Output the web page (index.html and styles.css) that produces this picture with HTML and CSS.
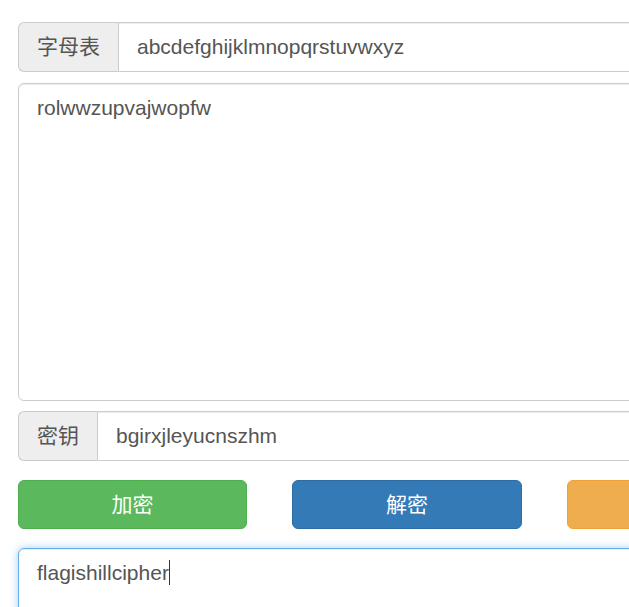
FILE: index.html
```html
<!DOCTYPE html>
<html lang="zh-CN">
<head>
<meta charset="utf-8">
<title>希尔密码</title>
<link rel="stylesheet" href="styles.css">
</head>
<body>
<div class="container">
  <div class="input-group">
    <span class="addon">字母表</span>
    <input class="field" type="text" value="abcdefghijklmnopqrstuvwxyz">
  </div>
  <textarea class="area area-input">rolwwzupvajwopfw</textarea>
  <div class="input-group">
    <span class="addon">密钥</span>
    <input class="field" type="text" value="bgirxjleyucnszhm">
  </div>
  <div class="buttons">
    <button class="btn btn-success">加密</button>
    <button class="btn btn-primary">解密</button>
    <button class="btn btn-warning">清空</button>
  </div>
  <div class="area area-output focused">flagishillcipher<span class="caret"></span></div>
</div>
</body>
</html>
```
FILE: styles.css
```css
html, body {
  margin: 0;
  padding: 0;
  overflow: hidden;
  background: #fff;
}
body {
  font-family: "Liberation Sans", Arial, "Noto Sans CJK SC", sans-serif;
  color: #555;
}
.container {
  width: 800px;
  padding: 22px 0 0 18px;
  display: flex;
  flex-direction: column;
}
.input-group {
  display: flex;
  height: 50px;
}
.addon {
  box-sizing: border-box;
  height: 50px;
  padding: 0 18px;
  font-size: 21px;
  line-height: 48px;
  background: #eee;
  border: 1px solid #ccc;
  border-right: 0;
  border-radius: 6px 0 0 6px;
  color: #555;
  white-space: nowrap;
}
.field {
  flex: 1;
  box-sizing: border-box;
  height: 50px;
  margin: 0;
  padding: 0 18px;
  font-family: inherit;
  font-size: 21px;
  color: #555;
  border: 1px solid #ccc;
  border-radius: 0 6px 6px 0;
  box-shadow: inset 0 1px 1px rgba(0,0,0,.075);
  outline: none;
}
.area {
  box-sizing: border-box;
  display: block;
  width: 100%;
  margin: 0;
  padding: 10px 18px;
  font-family: inherit;
  font-size: 21px;
  line-height: 28px;
  color: #555;
  border: 1px solid #ccc;
  border-radius: 6px;
  box-shadow: inset 0 1px 1px rgba(0,0,0,.075);
  resize: none;
  outline: none;
}
.area-input {
  height: 318px;
  margin: 11px 0 10px;
}
.buttons {
  display: grid;
  grid-template-columns: 229px 230px 230px;
  column-gap: 45px;
  margin-top: 19px;
}
.btn {
  box-sizing: border-box;
  height: 49px;
  margin: 0;
  padding: 0 0 3px;
  font-family: "Noto Sans CJK SC", sans-serif;
  font-size: 21px;
  line-height: 1;
  color: #fff;
  border: 1px solid transparent;
  border-radius: 6px;
}
.btn-success { background: #5cb85c; border-color: #4cae4c; }
.btn-primary { background: #337ab7; border-color: #2e6da4; }
.btn-warning { background: #f0ad4e; border-color: #eea236; }
.area-output {
  margin-top: 19px;
  height: 120px;
}
.focused {
  border-color: #66afe9;
  box-shadow: inset 0 1px 1px rgba(0,0,0,.075), 0 0 8px rgba(102,175,233,.6);
}
.caret {
  display: inline-block;
  width: 1px;
  height: 25px;
  background: #333;
  vertical-align: -5px;
}
```
